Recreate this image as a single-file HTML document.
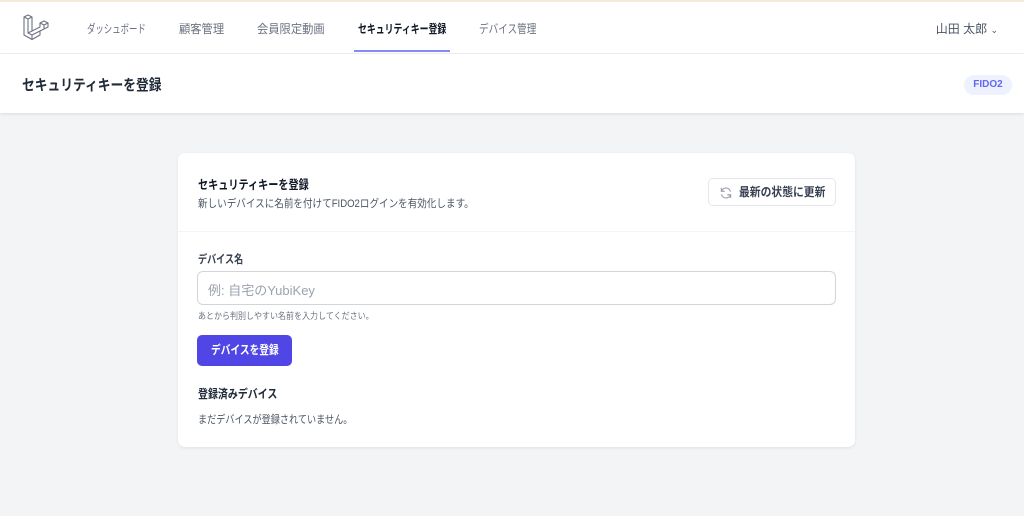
<!DOCTYPE html>
<html><head><meta charset="utf-8"><style>
*{box-sizing:border-box;margin:0;padding:0}
body{width:1024px;height:516px;background:#f3f4f6;font-family:"Liberation Sans","Noto Sans CJK JP",sans-serif;color:#111827;position:relative;overflow:hidden}
.x{display:inline-block;transform-origin:left center;white-space:nowrap}
.top{position:absolute;left:0;top:0;width:1024px;height:2px;background:#f3ecdc}
nav{position:absolute;top:2px;left:0;width:1024px;height:52px;background:#fff;border-bottom:1px solid #f0f0f2}
.logo{position:absolute;left:23px;top:12px}
.nl{position:absolute;top:18px;font-size:12px;color:#6b7280}
.nl.a{color:#111827;font-weight:bold}
.ul{position:absolute;left:354px;top:50px;width:96px;height:2px;background:#818cf8}
.user{position:absolute;right:26px;top:18px;font-size:12px;color:#4b5563}
header{position:absolute;top:54px;left:0;width:1024px;height:59px;background:#fff;box-shadow:0 1px 3px rgba(0,0,0,.1)}
header h1{position:absolute;left:22px;top:20px;font-size:15px;font-weight:bold;color:#1f2937}
.badge{position:absolute;left:964px;top:75px;width:48px;height:20px;border-radius:10px;background:#eef2ff;color:#6366f1;font-size:10px;font-weight:bold;text-align:center;line-height:20px}
.card{position:absolute;left:178px;top:153px;width:677px;height:294px;background:#fff;border-radius:7px;box-shadow:0 1px 3px rgba(0,0,0,.08)}
.hd{height:79px;border-bottom:1px solid #f3f4f6;position:relative}
.t{position:absolute;left:20px;top:21px;font-size:12.5px;font-weight:bold}
.s{position:absolute;left:20px;top:42px;font-size:11px;color:#4b5563}
.rb{position:absolute;left:530px;top:25px;width:128px;height:28px;border:1px solid #e5e7eb;border-radius:5px;font-size:12px;font-weight:bold;color:#374151;line-height:26px;padding-left:30px}
.rb svg{position:absolute;left:10px;top:7px}
.lbl{position:absolute;left:20px;top:98px;font-size:11.5px;font-weight:bold;color:#374151}
.in{position:absolute;left:19px;top:118px;width:639px;height:34px;border:1px solid #d1d5db;border-radius:6px;font-size:13px;color:#9ca3af;padding:8px 10px}
.hint{position:absolute;left:20px;top:156px;font-size:9px;color:#6b7280}
.btn{position:absolute;left:19px;top:182px;width:95px;height:31px;background:#4f46e5;border-radius:5px;color:#fff;font-size:12px;font-weight:bold;line-height:31px;padding-left:14px}
.h2{position:absolute;left:20px;top:232px;font-size:12px;font-weight:bold;color:#1f2937}
.em{position:absolute;left:20px;top:258px;font-size:11px;color:#4b5563}
</style></head><body>
<div class="top"></div>
<nav>
<svg class="logo" width="26" height="28" viewBox="0 0 26 28" fill="none" stroke="#6b7280" stroke-width="1.1" stroke-linejoin="round"><path d="M1 3 L5 1 L9 3 L9 17 L17 13 L17 9 L21 7 L25 9 L25 13 L17 17 L17 21 L9 25.5 L1 21 Z M1 3 L5 5 L9 3 M5 5 L5 19 L9 21 L17 17 M9 21 L9 25.5 M17 9 L21 11 L25 9 M21 11 L21 15 M5 19 L13 15 L17 13"/></svg>
<span class="nl x" style="left:87px;transform:scaleX(.7)">ダッシュボード</span>
<span class="nl x" style="left:179px;transform:scaleX(.94)">顧客管理</span>
<span class="nl x" style="left:257px;transform:scaleX(.94)">会員限定動画</span>
<span class="nl a x" style="left:358px;transform:scaleX(.74)">セキュリティキー登録</span>
<span class="nl x" style="left:479px;transform:scaleX(.8)">デバイス管理</span>
<span class="user">山田 太郎 <span style="font-size:9px">⌄</span></span>
</nav>
<div class="ul"></div>
<header><h1 class="x" style="transform:scaleX(.85)">セキュリティキーを登録</h1></header>
<div class="badge">FIDO2</div>
<div class="card">
<div class="hd"><div class="t x" style="transform:scaleX(.81)">セキュリティキーを登録</div><div class="s x" style="transform:scaleX(.87)">新しいデバイスに名前を付けてFIDO2ログインを有効化します。</div>
<div class="rb"><svg width="14" height="14" viewBox="0 0 24 24" fill="none" stroke="#9ca3af" stroke-width="2" stroke-linecap="round"><path d="M4 4v5h5M20 20v-5h-5M19.5 9A8 8 0 0 0 5 7.5L4 9M4.5 15A8 8 0 0 0 19 16.5L20 15"/></svg><span class="x" style="transform:scaleX(.9)">最新の状態に更新</span></div></div>
<div class="lbl x" style="transform:scaleX(.79)">デバイス名</div>
<div class="in">例: 自宅のYubiKey</div>
<div class="hint x" style="transform:scaleX(.89)">あとから判別しやすい名前を入力してください。</div>
<div class="btn"><span class="x" style="transform:scaleX(.81)">デバイスを登録</span></div>
<div class="h2 x" style="transform:scaleX(.83)">登録済みデバイス</div>
<div class="em x" style="transform:scaleX(.83)">まだデバイスが登録されていません。</div>
</div>
</body></html>
